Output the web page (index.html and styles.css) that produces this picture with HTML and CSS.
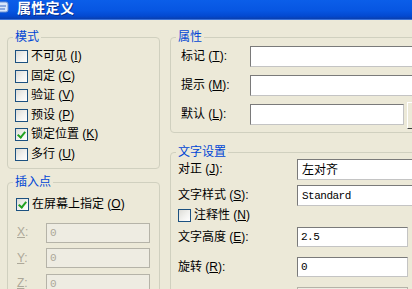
FILE: index.html
```html
<!DOCTYPE html>
<html lang="zh-CN">
<head>
<meta charset="utf-8">
<title>属性定义</title>
<link rel="stylesheet" href="styles.css">
</head>
<body>
<div class="title">
  <svg class="ico" width="10" height="14" viewBox="0 0 10 14"><rect x="-4" y="2" width="12" height="10" rx="2" fill="#d8e6fb" stroke="#6c8fd0"/><path d="M-1 6h7M-1 9h6" stroke="#3b6bc4"/></svg>
  <span class="title-text">属性定义</span>
</div>
<div class="main">
  <div class="col left">
    <fieldset class="grp mode">
      <legend>模式</legend>
      <label class="chk"><span class="box"></span><span>不可见 (<u>I</u>)</span></label>
      <label class="chk"><span class="box"></span><span>固定 (<u>C</u>)</span></label>
      <label class="chk"><span class="box"></span><span>验证 (<u>V</u>)</span></label>
      <label class="chk"><span class="box"></span><span>预设 (<u>P</u>)</span></label>
      <label class="chk"><span class="box on"></span><span>锁定位置 (<u>K</u>)</span></label>
      <label class="chk"><span class="box"></span><span>多行 (<u>U</u>)</span></label>
    </fieldset>
    <fieldset class="grp ins">
      <legend>插入点</legend>
      <label class="chk"><span class="box on"></span><span>在屏幕上指定 (<u>O</u>)</span></label>
      <div class="coords">
        <span class="dlabel"><u>X</u>:</span><span class="dinput">0</span>
        <span class="dlabel"><u>Y</u>:</span><span class="dinput">0</span>
        <span class="dlabel"><u>Z</u>:</span><span class="dinput">0</span>
      </div>
    </fieldset>
  </div>
  <div class="col right">
    <fieldset class="grp attr">
      <legend>属性</legend>
      <div class="attr-grid">
        <span class="alabel">标记 (<u>T</u>):</span><span class="input"></span>
        <span class="alabel">提示 (<u>M</u>):</span><span class="input"></span>
        <span class="alabel">默认 (<u>L</u>):</span><span class="input-with-btn"><span class="input"></span><span class="btn"></span></span>
      </div>
    </fieldset>
    <fieldset class="grp text">
      <legend>文字设置</legend>
      <div class="trow r1"><span class="tlabel">对正 (<u>J</u>):</span><span class="combo">左对齐</span></div>
      <div class="trow r2"><span class="tlabel">文字样式 (<u>S</u>):</span><span class="combo mono">Standard</span></div>
      <label class="chk r3"><span class="box"></span><span>注释性 (<u>N</u>)</span></label>
      <div class="trow r4"><span class="tlabel">文字高度 (<u>E</u>):</span><span class="input short mono">2.5</span></div>
      <div class="trow r5"><span class="tlabel">旋转 (<u>R</u>):</span><span class="input short mono">0</span></div>
      <div class="trow r6"><span class="tlabel"></span><span class="dinput short"></span></div>
    </fieldset>
  </div>
</div>
</body>
</html>
```
FILE: styles.css
```css
* { box-sizing: border-box; }
html, body { margin: 0; padding: 0; }
body {
  width: 412px;
  height: 289px;
  overflow: hidden;
  background: #ECE9D8;
  font-family: "Liberation Sans", "Noto Sans CJK SC", sans-serif;
  font-size: 12px;
  line-height: 13px;
  color: #000;
}
u { text-decoration: underline; text-underline-offset: 1px; }

.title {
  height: 20px;
  background: linear-gradient(#0b5ee9 0%, #0756e2 55%, #0349d0 85%, #0a3fae 100%);
  color: #fff;
  display: flex;
  align-items: flex-start;
  gap: 7px;
  border-bottom: 1px solid #3d73d8;
}
.ico { flex: none; }
.title-text {
  font-family: "Noto Sans CJK SC", sans-serif;
  font-weight: bold;
  font-size: 14px;
  line-height: 15px;
  letter-spacing: 0.3px;
  text-shadow: 1px 1px 0 #0a2f8a;
}

.main {
  display: flex;
  gap: 10px;
  padding: 11px 0 0 7px;
}
.col { flex: none; }
.left { width: 153px; }
.right { width: 266px; }

.grp {
  margin: 0;
  min-width: 0;
  border: 1px solid #D0D0BF;
  border-radius: 4px;
}
.grp legend {
  padding: 0 2px;
  color: #0046D5;
  line-height: 13px;
}

.mode { padding: 3px 9px 4px 7px; }
.mode legend { margin-left: -2px; }

.chk {
  display: flex;
  align-items: center;
  height: 19.5px;
  gap: 3px;
  white-space: nowrap;
}
.box {
  width: 13px;
  height: 13px;
  flex: none;
  border: 1px solid #1C5180;
  background: linear-gradient(135deg, #dcdcd7 0%, #f2f2ef 55%, #ffffff 100%);
  position: relative;
}
.box.on::after {
  content: "";
  position: absolute;
  left: 3px;
  top: 1px;
  width: 3px;
  height: 6px;
  border: solid #21A121;
  border-width: 0 2px 2px 0;
  transform: rotate(40deg);
}

.ins { margin-top: 7px; padding: 6px 9px 20px 8px; }
.ins legend { margin-left: -3px; }
.coords {
  margin-top: 8px;
  display: grid;
  grid-template-columns: 30px 104px;
  grid-auto-rows: 20px;
  row-gap: 5.5px;
  align-items: center;
}
.dlabel { color: #ACA899; padding-left: 1px; }
.dinput {
  height: 20px;
  border: 1px solid #B5B3A8;
  background: #EEECE2;
  color: #ACA899;
  padding: 2px 3px;
  font-family: "Liberation Mono", monospace;
  font-size: 11px;
  line-height: 14px;
}

.attr { padding: 2px 6px 7px 5px; }
.attr-grid {
  display: grid;
  grid-template-columns: 74px 179px;
  grid-auto-rows: 21px;
  row-gap: 8px;
  align-items: center;
}
.alabel { padding-left: 5px; white-space: nowrap; }
.input {
  display: block;
  height: 21px;
  background: #fff;
  border: 1px solid;
  border-color: #7a7a7a #c4c4c4 #c4c4c4 #7a7a7a;
  padding: 2px 3px;
}
.input-with-btn { display: flex; gap: 3px; align-items: flex-start; height: 21px; }
.input-with-btn .input { width: 154px; flex: none; }
.btn {
  flex: none;
  width: 22px;
  height: 27px;
  margin-top: -2px;
  border: 1px solid;
  border-color: #fff #404040 #404040 #fff;
  background: #ECE9D8;
}

.text { margin-top: 13px; padding: 0 6px 20px 7px; }
.text legend { margin-left: -2px; }
.trow {
  display: grid;
  grid-template-columns: 119px 132px;
  align-items: center;
  white-space: nowrap;
}
.r1 { margin-top: 0; height: 21px; }
.r2 { margin-top: 5px; height: 21px; }
.r3 { margin-top: 2px; height: 14px; }
.r4 { margin-top: 5px; height: 20px; }
.r5 { margin-top: 10px; height: 20px; }
.r6 { margin-top: 10px; height: 20px; }
.combo {
  display: block;
  height: 21px;
  width: 150px;
  background: #fff;
  border: 1px solid;
  border-color: #7a7a7a #c4c4c4 #c4c4c4 #7a7a7a;
  padding: 3px 4px;
  line-height: 14px;
}
.r4 .input, .r5 .input { height: 20px; }
.short { width: 111px; }
.mono {
  font-family: "Liberation Mono", monospace;
  font-size: 11px;
  letter-spacing: -0.5px;
  line-height: 14px;
}
.input.mono { padding: 2px 3px; }
```
